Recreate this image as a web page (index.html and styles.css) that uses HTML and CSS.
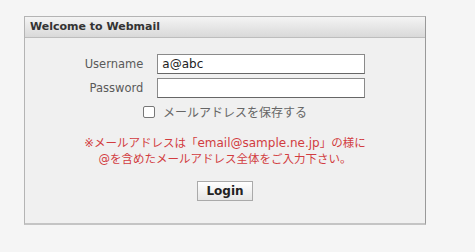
FILE: index.html
```html
<!DOCTYPE html>
<html lang="ja">
<head>
    <meta charset="UTF-8">
    <title>Webmail Login</title>
    <link rel="stylesheet" href="styles.css">
</head>
<body>
    <div class="panel">
        <div class="panel-head">Welcome to Webmail</div>
        <form class="login-form">
            <div class="fields">
                <label for="user">Username</label>
                <input type="text" id="user" value="a@abc">
                <label for="pass">Password</label>
                <input type="password" id="pass">
            </div>
            <div class="remember">
                <span class="check"></span>
                <span>メールアドレスを保存する</span>
            </div>
            <p class="note">※メールアドレスは「<span class="latin">email@sample.ne.jp</span>」の様に<br>@を含めたメールアドレス全体をご入力下さい。</p>
            <div class="actions">
                <button type="button" class="btn-login">Login</button>
            </div>
        </form>
    </div>
</body>
</html>
```

FILE: styles.css
```css
body {
    margin: 0;
    padding: 16px 0 0 24px;
    background: #f5f5f5;
    font-family: "DejaVu Sans", Verdana, "Noto Sans CJK JP", sans-serif;
}
.panel {
    width: 400px;
    height: 206px;
    background: #f0f0f0;
    border: 1px solid #b4b4b4;
    border-right-color: #999;
    border-bottom: 2px solid #c4c4c4;
}
.panel-head {
    height: 20px;
    line-height: 20px;
    padding-left: 5px;
    font-size: 11px;
    font-weight: bold;
    color: #333;
    background: linear-gradient(#f4f4f4, #d9d9d9);
    border-bottom: 1px solid #bdbdbd;
}
.login-form {
    margin: 0;
    padding-top: 16px;
}
.fields {
    display: grid;
    grid-template-columns: auto 208px;
    justify-content: center;
    column-gap: 14px;
    row-gap: 4px;
    align-items: center;
}
.fields label {
    text-align: right;
    font-size: 11.5px;
    color: #5a5a5a;
}
.fields input {
    box-sizing: border-box;
    width: 208px;
    height: 20px;
    margin: 0;
    padding: 0 4px;
    border: 1px solid #8a8a8a;
    border-bottom-color: #666;
    background: #fff;
    font-family: "DejaVu Sans", "Noto Sans CJK JP", sans-serif;
    font-size: 12px;
    color: #222;
}
.remember {
    display: flex;
    justify-content: center;
    align-items: center;
    gap: 8px;
    margin-top: 5px;
    font-size: 12px;
    color: #666;
}
.check {
    width: 10px;
    height: 10px;
    border: 1px solid #777;
    border-radius: 2px;
    background: #fff;
}
.note {
    margin: 15px 0 0;
    text-align: center;
    font-size: 11.5px;
    line-height: 16px;
    color: #d23c40;
}
.note .latin {
    font-size: 12px;
}
.actions {
    text-align: center;
    margin-top: 13px;
}
.btn-login {
    height: 20px;
    padding: 0 8px;
    font-family: "DejaVu Sans", sans-serif;
    font-size: 12px;
    font-weight: bold;
    color: #222;
    background: linear-gradient(#ffffff, #e6e6e6);
    border: 1px solid #aaa;
    border-radius: 0;
}
```
